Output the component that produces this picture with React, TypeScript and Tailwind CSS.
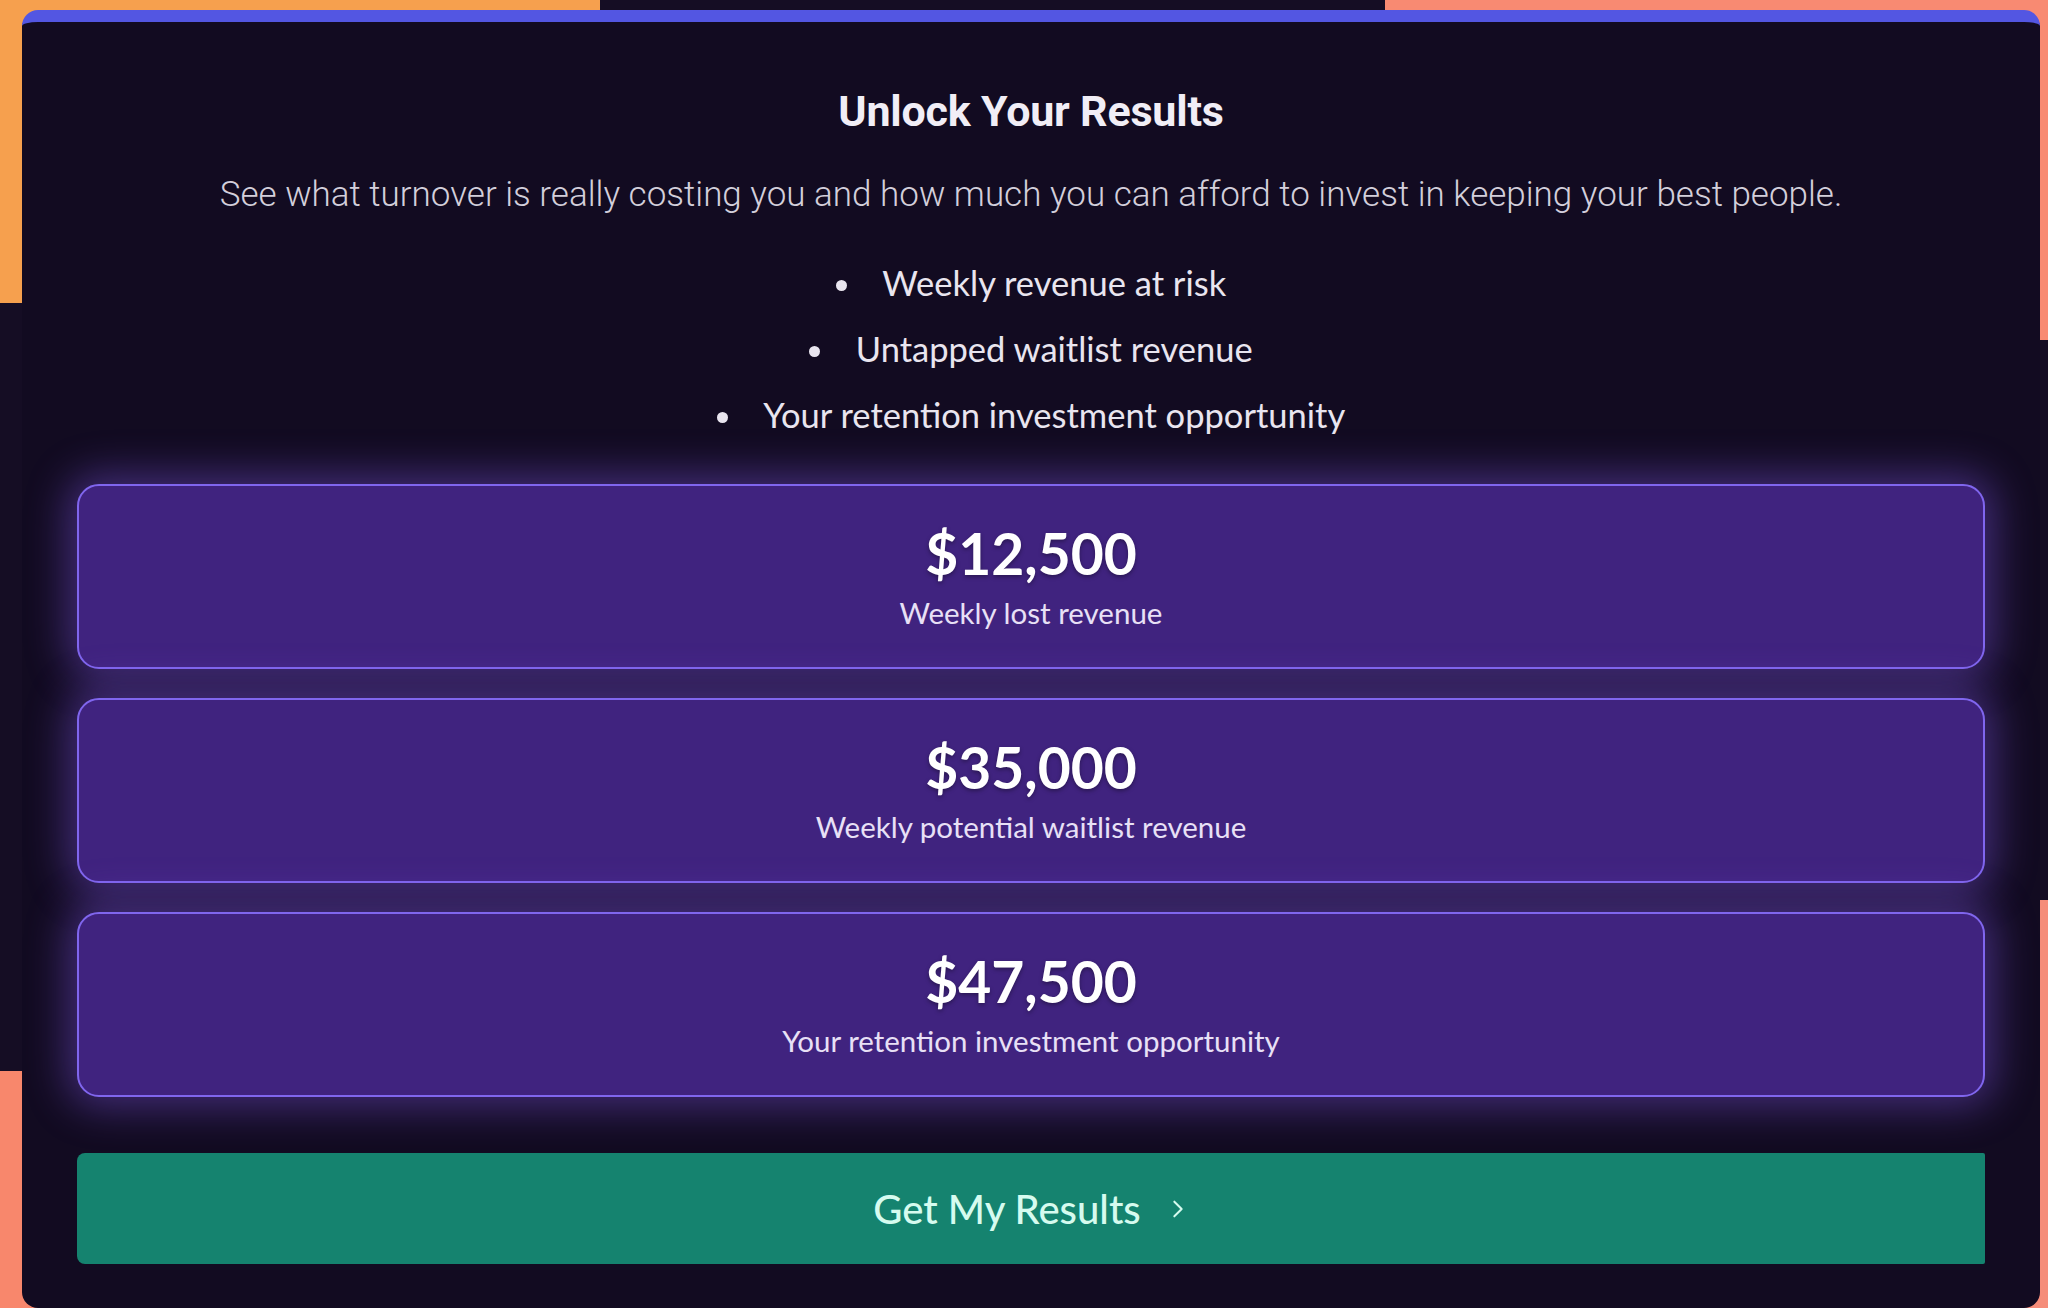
import React from 'react';

const results = [
  { amount: '$12,500', label: 'Weekly lost revenue' },
  { amount: '$35,000', label: 'Weekly potential waitlist revenue' },
  { amount: '$47,500', label: 'Your retention investment opportunity' },
];

const bullets = ['Weekly revenue at risk', 'Untapped waitlist revenue', 'Your retention investment opportunity'];

const App = () => {
  return (
    <div className="relative w-[2048px] h-[1308px] overflow-hidden bg-[#150d24]">
      {/* Decorative background shapes */}
      <div className="absolute left-0 top-0 w-[600px] h-[303px] bg-[#f6a04e]" />
      <div className="absolute left-[1385px] top-0 w-[663px] h-[340px] bg-[#f88a72]" />
      <div className="absolute left-0 top-[1071px] w-[60px] h-[237px] bg-[#f8876c]" />
      <div className="absolute left-[1990px] top-[900px] w-[58px] h-[408px] bg-[#f58d7a]" />

      <div className="relative z-10 pt-[10px] pl-[22px] pr-[8px]">
        <div
          className="h-[1298px] rounded-[16px] bg-[#120b21] border-t-[12px] border-[#5356e2] px-[55px] pt-[64px] flex flex-col"
          style={{ fontFamily: 'Roboto, sans-serif' }}
        >
          {/* Title */}
          <h1 className="text-center text-[43px] leading-[50px] font-bold text-[#f1eef6] tracking-[-0.2px]">
            Unlock Your Results
          </h1>
          <p className="mt-[38px] text-center text-[35px] leading-[42px] font-light text-[#d3cfdb]">
            See what turnover is really costing you and how much you can afford to invest in keeping your best people.
          </p>

          {/* Bullets */}
          <ul
            className="mt-[34px] list-disc list-inside text-center text-[34.5px] leading-[66px] text-[#e9e5ef]"
            style={{ fontFamily: 'Lato, sans-serif' }}
          >
            {bullets.map((b) => (
              <li key={b}>{b}</li>
            ))}
          </ul>

          {/* Result cards */}
          <div className="mt-[36px] flex flex-col gap-[29px]" style={{ fontFamily: 'Lato, sans-serif' }}>
            {results.map((r) => (
              <div
                key={r.amount}
                className="h-[185px] rounded-[22px] border-2 border-[#8066ee] bg-[#40237f] shadow-[0_0_40px_10px_rgba(125,85,225,0.45)] flex flex-col items-center justify-center"
              >
                <div className="text-[57px] leading-[66px] font-bold text-white [text-shadow:0_2px_4px_rgba(0,0,0,0.35)]">
                  {r.amount}
                </div>
                <div className="mt-[9px] text-[29.5px] leading-[36px] text-[#e8e0f6]">{r.label}</div>
                <div className="h-[3px]" />
              </div>
            ))}
          </div>

          {/* CTA */}
          <button
            className="mt-[56px] h-[111px] w-full rounded-l-[8px] rounded-r-[2px] bg-[#15836f] flex items-center justify-center gap-[26px] text-[#d6fbef]"
            style={{ fontFamily: 'Lato, sans-serif' }}
          >
            <span className="text-[40px] font-medium">Get My Results</span>
            <svg width="22" height="24" viewBox="0 0 24 24" fill="none" stroke="currentColor" strokeWidth="2.2" strokeLinecap="round" strokeLinejoin="round">
              <path d="M8 4l8 8-8 8" />
            </svg>
          </button>
        </div>
      </div>
    </div>
  );
};

export default App;
